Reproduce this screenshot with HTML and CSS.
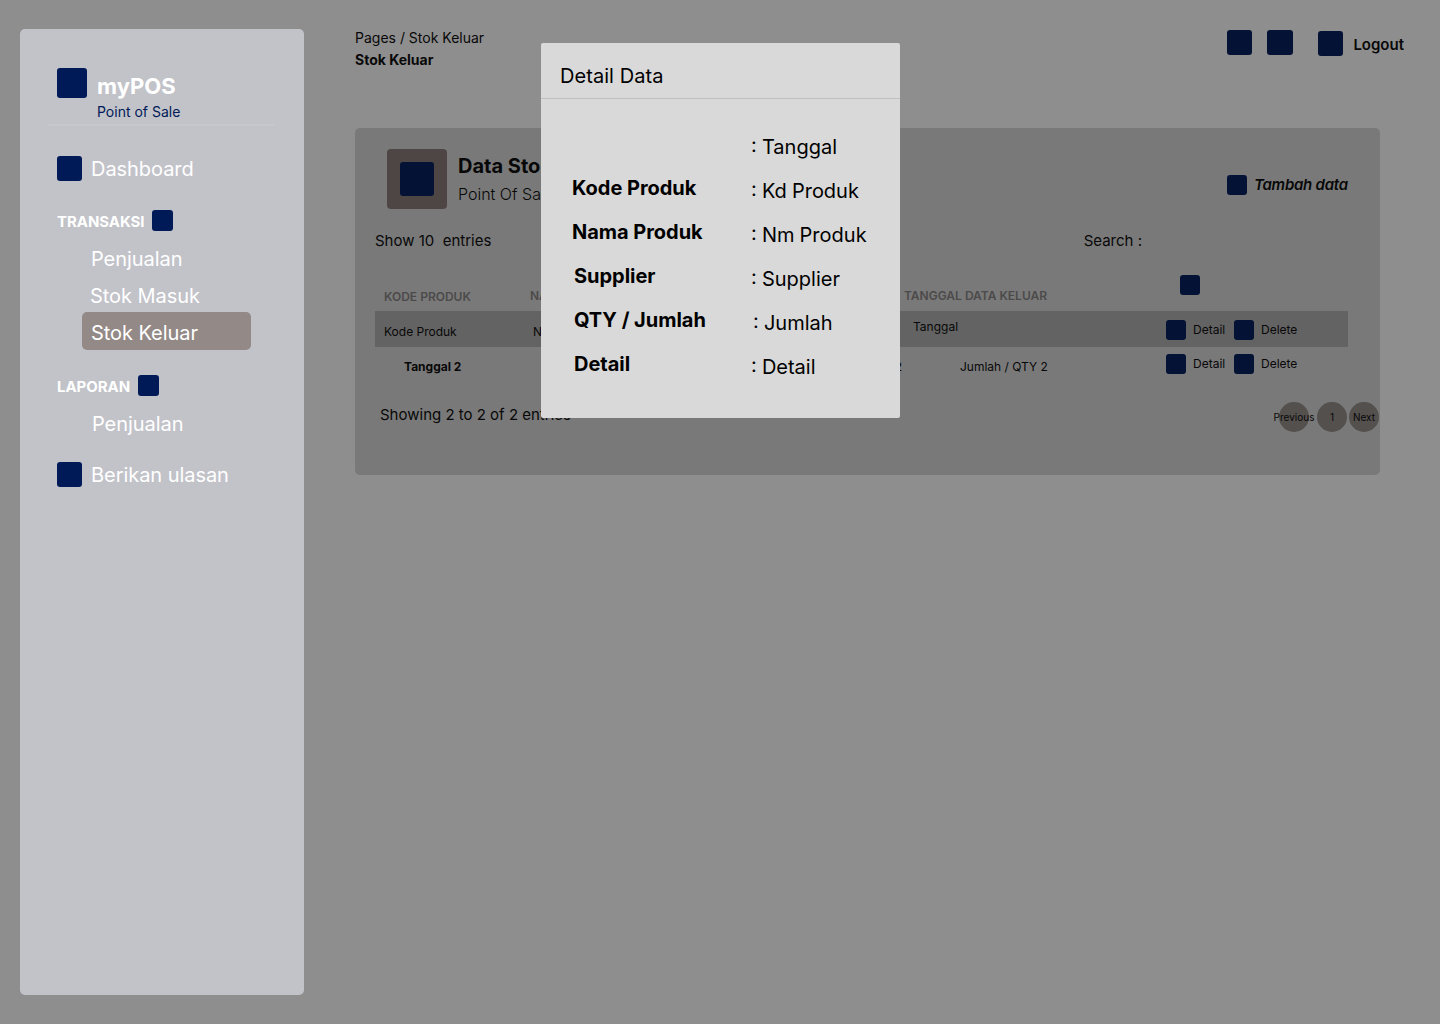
FILE: index.html
```html
<!DOCTYPE html>
<html lang="id">
<head>
<meta charset="utf-8">
<title>myPOS - Stok Keluar</title>
<link rel="stylesheet" href="styles.css">
</head>
<body>
<div class="app">
  <nav class="sidebar">
    <div class="brand">
      <span class="icon icon-30"></span>
      <div class="brand-text"><strong>myPOS</strong><span>Point of Sale</span></div>
    </div>
    <a class="nav-main"><span class="icon icon-25"></span>Dashboard</a>
    <h2 class="nav-group">TRANSAKSI<span class="icon icon-21"></span></h2>
    <a class="nav-sub">Penjualan</a>
    <a class="nav-sub masuk">Stok Masuk</a>
    <a class="nav-sub active">Stok Keluar</a>
    <h2 class="nav-group laporan">LAPORAN<span class="icon icon-21"></span></h2>
    <a class="nav-sub report">Penjualan</a>
    <a class="nav-main review"><span class="icon icon-25"></span>Berikan ulasan</a>
  </nav>
  <main class="content">
    <header class="topbar">
      <div class="crumbs"><span>Pages / Stok Keluar</span><strong>Stok Keluar</strong></div>
      <div class="tools">
        <span class="icon dim tool"></span>
        <span class="icon dim tool second"></span>
        <a class="logout"><span class="icon dim tool"></span>Logout</a>
      </div>
    </header>
    <section class="card">
      <div class="card-head">
        <span class="badge"><span class="icon dim icon-34"></span></span>
        <div class="card-title"><h1>Data Stok Keluar</h1><p>Point Of Sale</p></div>
        <a class="add"><span class="icon dim icon-20"></span>Tambah data</a>
      </div>
      <div class="filters"><span class="show">Show 10&nbsp; entries</span><span class="search">Search :</span></div>
      <div class="table">
        <div class="row head">
          <span class="c1">KODE PRODUK</span><span class="c2">NAMA PRODUK</span><span class="c3">TANGGAL DATA KELUAR</span><span class="icon dim icon-20"></span>
        </div>
        <div class="row striped">
          <span class="c1">Kode Produk</span><span class="c2">Nama Produk</span><span class="c3">Tanggal</span>
          <span class="actions"><span class="icon dim icon-20"></span><a>Detail</a><span class="icon dim icon-20"></span><a>Delete</a></span>
        </div>
        <div class="row second-row">
          <strong class="c1">Tanggal 2</strong><span class="c2">Supplier 2</span><span class="c3">Jumlah / QTY 2</span>
          <span class="actions"><span class="icon dim icon-20"></span><a>Detail</a><span class="icon dim icon-20"></span><a>Delete</a></span>
        </div>
      </div>
      <div class="card-foot">
        <span class="summary">Showing 2 to 2 of 2 entries</span>
        <div class="pager"><a class="previous">Previous</a><a>1</a><a>Next</a></div>
      </div>
    </section>
  </main>
</div>
<div class="modal">
  <h2>Detail Data</h2>
  <div class="modal-body">
    <div class="labels"><span>Kode Produk</span><span>Nama Produk</span><span class="inset">Supplier</span><span class="inset">QTY / Jumlah</span><span class="inset">Detail</span></div>
    <div class="values"><span>: Tanggal</span><span>: Kd Produk</span><span>: Nm Produk</span><span>: Supplier</span><span class="inset">: Jumlah</span><span>: Detail</span></div>
  </div>
</div>
</body>
</html>
```
FILE: styles.css
```css
* { box-sizing: border-box; }
body { margin: 0; background: #8e8e8e; font-family: Inter, sans-serif; color: #080808; white-space: nowrap; }
h1, h2, p { margin: 0; }
.app { display: flex; width: 1440px; height: 1024px; padding: 29px 0 29px 20px; overflow: hidden; }

.icon { display: block; flex: none; background: #001a57; border-radius: 3px; }
.dim { background: #041335; }
.icon-20 { width: 20px; height: 20px; }
.icon-21 { width: 21px; height: 21px; }
.icon-25 { width: 25px; height: 25px; }
.icon-30 { width: 30px; height: 30px; }
.icon-34 { width: 34px; height: 34px; }

.sidebar { width: 284px; height: 966px; flex: none; padding-top: 39px; background: #c2c3c9; border-radius: 5px; color: #fff; font-size: 20px; }
.brand { display: flex; gap: 10px; height: 58px; width: 226px; margin-left: 28px; padding-left: 9px; border-bottom: 2px solid #c7c8cd; }
.brand-text { display: flex; flex-direction: column; padding-top: 4px; }
.brand-text strong { font-size: 22px; line-height: 28px; }
.brand-text span { font-size: 14px; line-height: 24px; color: #001a57; }
.nav-main { display: flex; gap: 9px; height: 25px; line-height: 26px; margin: 30px 0 0 37px; letter-spacing: -0.05px; }
.nav-group { display: flex; justify-content: space-between; width: 116px; height: 21px; margin: 29px 0 9px 37px; font-size: 15px; line-height: 24px; font-weight: 700; letter-spacing: -0.05px; }
.nav-sub { display: flex; align-items: center; width: 169px; height: 37px; margin-left: 62px; padding-left: 9px; letter-spacing: -0.05px; }
.masuk { padding-left: 8px; height: 35px; padding-top: 2px; }
.active { height: 38px; padding-top: 4px; background: #938986; border-radius: 5px; }
.laporan { width: 102px; margin-top: 25px; }
.report { padding-left: 10px; }
.review { margin-top: 20px; }

.content { width: 1049px; margin-left: 51px; }
.topbar { display: flex; justify-content: space-between; height: 99px; }
.crumbs { display: flex; flex-direction: column; font-size: 14px; line-height: 22px; margin-top: -2px; }
.tools { display: flex; font-size: 15px; padding-top: 1px; }
.tool { width: 25.5px; height: 25px; }
.second { margin-left: 15px; }
.logout { display: flex; gap: 10px; margin: 1px 0 0 25px; height: 27px; line-height: 27px; font-weight: 600; }

.card { width: 1025px; height: 347px; padding-top: 21px; background: #797979; border-radius: 5px; }
.card-head { display: flex; height: 60px; padding: 0 32px; }
.badge { width: 60px; height: 60px; padding: 13px; background: #4d4645; border-radius: 4px; }
.card-title { margin-left: 11px; padding-top: 3px; }
.card-title h1 { font-size: 20px; line-height: 28px; }
.card-title p { font-size: 16px; line-height: 29px; font-weight: 300; }
.add { display: flex; gap: 7px; width: 121px; margin: 26px 0 0 auto; height: 20px; line-height: 20px; font-size: 15px; font-style: italic; font-weight: 600; letter-spacing: -0.25px; }
.filters { display: flex; justify-content: space-between; padding: 22px 238px 0 20px; height: 66px; font-size: 15px; line-height: 20px; }

.table { width: 973px; margin-left: 20px; font-size: 12px; line-height: 16px; }
.row { display: flex; height: 36px; padding-left: 9px; }
.head { color: #4c4a4a; font-weight: 600; padding-top: 13px; }
.head .c1 { width: 146px; padding-top: 1px; }
.head .c2 { width: 374px; }
.head .c3 { width: 276px; }
.head .icon { margin-top: -13px; }
.striped { background: #636363; }
.striped .c1 { width: 149px; padding-top: 13px; }
.striped .c2 { width: 380px; padding-top: 13px; }
.striped .c3 { width: 253px; padding-top: 8px; }
.second-row { padding-left: 29px; }
.second-row .c1 { width: 437px; padding-top: 12px; }
.second-row .c2 { width: 61px; text-align: right; padding-top: 12px; }
.second-row .c3 { width: 206px; margin-left: 58px; padding-top: 12px; }
.actions { display: flex; margin-top: 9px; height: 20px; line-height: 20px; }
.second-row .actions { margin-top: 7px; }
.actions a { width: 41px; margin-left: 7px; }

.card-foot { display: flex; justify-content: space-between; padding: 19px 1px 0 25px; }
.summary { font-size: 15px; line-height: 26px; }
.pager { display: flex; gap: 2px; font-size: 10px; }
.pager a { display: flex; align-items: center; justify-content: center; width: 30px; height: 30px; border-radius: 50%; background: #54504e; }
.pager .previous { margin-right: 6px; }

.modal { position: absolute; left: 541px; top: 43px; width: 359px; height: 375px; background: #d9d9d9; border-radius: 2px; font-size: 20px; color: #000; }
.modal h2 { height: 56px; padding: 21px 0 0 19px; border-bottom: 1px solid #bfc0c4; font-size: 20px; line-height: 24px; font-weight: 400; letter-spacing: 0.06px; }
.modal-body { display: flex; padding: 26px 0 0 31px; line-height: 44px; }
.labels, .values { display: flex; flex-direction: column; }
.labels { width: 179px; padding-top: 41px; font-weight: 700; letter-spacing: -0.03px; }
.values { word-spacing: -0.5px; }
.inset { padding-left: 2px; }
```
